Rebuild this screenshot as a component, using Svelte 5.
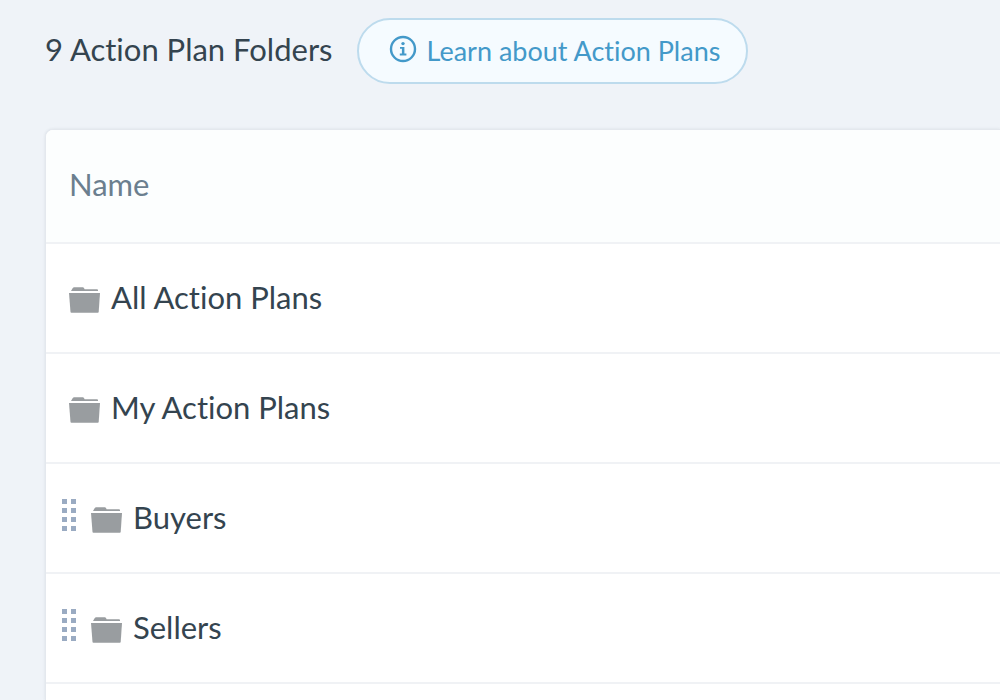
<script lang="ts">
  interface Folder {
    name: string;
    draggable: boolean;
  }

  let folderCount = 9;

  let folders: Folder[] = [
    { name: 'All Action Plans', draggable: false },
    { name: 'My Action Plans', draggable: false },
    { name: 'Buyers', draggable: true },
    { name: 'Sellers', draggable: true },
  ];
</script>

<main class="page">
  <header class="header">
    <h1 class="title">{folderCount} Action Plan Folders</h1>
    <a class="learn-link" href="#learn">
      <svg class="info-icon" viewBox="0 0 28 28" aria-hidden="true">
        <circle cx="14" cy="14" r="12" fill="none" stroke="currentColor" stroke-width="2.4" />
        <circle cx="14" cy="8.6" r="1.7" fill="currentColor" />
        <path d="M11 12h4.4v6.6H17.4v1.8H10.8v-1.8h2.1V13.800H11z" fill="currentColor" />
      </svg>
      Learn about Action Plans
    </a>
  </header>

  <section class="card">
    <table class="folders">
      <thead>
        <tr>
          <th scope="col">Name</th>
        </tr>
      </thead>
      <tbody>
        {#each folders as folder (folder.name)}
          <tr>
            <td class:draggable={folder.draggable}>
              <div class="folder">
                {#if folder.draggable}
                  <button class="handle" type="button" aria-label="Reorder {folder.name}">
                    <svg viewBox="0 0 14 32" aria-hidden="true">
                      {#each [0, 9, 18, 27] as y}
                        <rect x="0" {y} width="5" height="5" />
                        <rect x="9" {y} width="5" height="5" />
                      {/each}
                    </svg>
                  </button>
                {/if}
                <svg class="folder-icon" viewBox="0 0 32 26" aria-hidden="true">
                  <path d="M2 4 3.6 1.2Q4.2.3 5.2.3h8.600Q14.600.3 15 1.100L15.600 2.200H28Q29 2.200 29 3.200V4z" />
                  <path d="M0 6h31L29.700 25Q29.600 25.800 28.800 25.800H2.400Q1.600 25.800 1.500 25z" />
                </svg>
                <span class="name">{folder.name}</span>
              </div>
            </td>
          </tr>
        {/each}
      </tbody>
    </table>
  </section>
</main>

<style>
  :global(body) {
    margin: 0;
    background: #eff3f8;
  }

  .page {
    display: flex;
    flex-direction: column;
    box-sizing: border-box;
    min-height: 100vh;
    padding: 18px 0 0 45px;
    color: #34444f;
    font-family: Lato, 'Liberation Sans', sans-serif;
    font-variant-ligatures: none;
  }

  .header {
    display: flex;
    align-items: center;
    gap: 24px;
    margin-bottom: 45px;
  }

  .title {
    margin: 0;
    padding-bottom: 4px;
    font-size: 31px;
    font-weight: 400;
    line-height: 40px;
  }

  .learn-link {
    display: flex;
    align-items: center;
    gap: 10px;
    box-sizing: border-box;
    height: 66px;
    padding: 0 26px 0 30px;
    border: 2px solid #bddbed;
    border-radius: 33px;
    background: #f5fbff;
    color: #4399c9;
    font-size: 27px;
    line-height: 36px;
    text-decoration: none;
  }

  .info-icon {
    width: 28px;
    height: 28px;
    margin-bottom: 4px;
  }

  .card {
    flex: 1;
    border: 1px solid #e4e8ee;
    border-width: 1px 0 0 1px;
    border-radius: 8px 0 0 0;
    background: #fff;
    box-shadow: 0 0 3px rgba(52, 68, 79, 0.1);
    overflow: hidden;
  }

  .folders {
    width: 100%;
    border-collapse: separate;
    border-spacing: 0;
    font-size: 31px;
    line-height: 40px;
  }

  th,
  td {
    box-sizing: border-box;
    height: 110px;
    padding: 0 23px;
    border-bottom: 2px solid #f0f2f5;
    text-align: left;
  }

  th {
    height: 114px;
    padding-bottom: 4px;
    background: #fcfefe;
    color: #6b7f8f;
    font-weight: 400;
  }

  td {
    padding-bottom: 2px;
  }

  td.draggable {
    padding-left: 16px;
  }

  .folder {
    display: flex;
    align-items: center;
  }

  .handle {
    display: flex;
    margin: 0 15px 4px 0;
    padding: 0;
    border: 0;
    background: none;
    cursor: grab;
  }

  .handle svg {
    width: 14px;
    height: 32px;
    fill: #9aabc2;
  }

  .folder-icon {
    width: 32px;
    height: 26px;
    margin: 6px 10px 0 0;
    fill: #999da0;
  }
</style>
